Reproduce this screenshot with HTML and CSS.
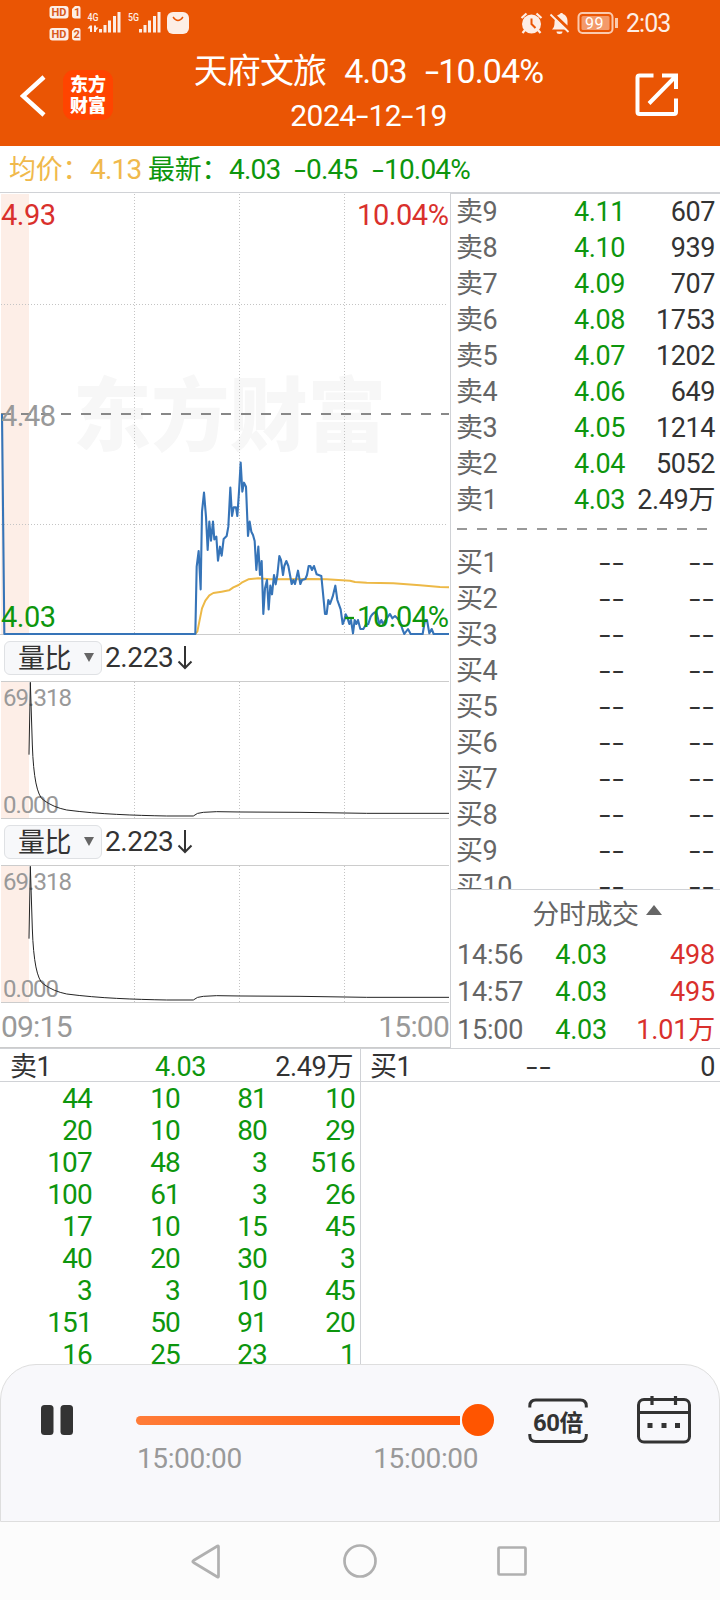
FILE: index.html
```html
<!DOCTYPE html>
<html lang="zh-CN">
<head>
<meta charset="utf-8">
<title>天府文旅</title>
<link rel="stylesheet" href="styles.css">
</head>
<body>
<main class="app">
  <header class="top">
    <svg class="status" viewBox="0 0 720 48">
      <g fill="#fdeee6">
        <rect x="49.500" y="6" width="19" height="12.500" rx="3"/><path d="M75 6h3.500q2 0 2 2v10.500H75q-3 0-3-3V9z"/>
        <rect x="49.500" y="28" width="19" height="12.500" rx="3"/><path d="M75 28h3.500q2 0 2 2v10.500H75q-3 0-3-3V31z"/>
        <g class="tiny"><text x="87.500" y="20.500" textLength="11" lengthAdjust="spacingAndGlyphs">4G</text><text x="128" y="20.500" textLength="11" lengthAdjust="spacingAndGlyphs">5G</text></g>
        <path d="M99 29h3v3.500h-3zM103.500 25h3v7.500h-3zM108 20.500h3v12h-3zM113 16h3v16.500h-3zM117.500 12h3v20.500h-3zM139 29h3v3.500h-3zM143.500 25h3v7.500h-3zM148 20.500h3v12h-3zM153 16h3v16.500h-3zM157.500 12h3v20.500h-3z"/>
        <path d="M90 25.500h2V32h-2zM87.500 28.500l2.500-3v3zM94 25.500h2V32h-2zM96 30.500l2.500-3h-2.500z"/>
        <rect x="167" y="12" width="22" height="22" rx="6"/>
      </g>
      <path d="M173 17q5 7 10 0" fill="none" stroke="#ea5504" stroke-width="1.300"/>
      <g fill="#d85a1c" class="hd"><text x="51.500" y="16.300" textLength="15">HD</text><text x="74" y="16.300">1</text><text x="51.500" y="38.300" textLength="15">HD</text><text x="73.500" y="38.300">2</text></g>
      <g fill="#fdeee6">
        <circle cx="531.500" cy="24" r="9.500"/>
        <path d="M521.500 18l5-4.500M541.500 18l-5-4.500M525 30l-2.500 3M538 30l2.500 3" stroke="#fdeee6" stroke-width="2.200"/>
        <path d="M552 29.500c2-2 2.500-4 2.500-7 0-1.500.5-3 1-4l11.500 11zM557 15.500l3-1.500c0-1.500 3-1.500 3 0 3 1 4.500 4 4.500 7v4.500zM556.500 31.500h6a3 2.500 0 0 1-6 0z"/>
        <path d="M550.500 14.500l18 17.500" stroke="#fdeee6" stroke-width="1.800"/>
      </g>
      <path d="M531.500 18.500v5.500l4 4" fill="none" stroke="#ea5504" stroke-width="2"/>
      <rect x="578.500" y="13" width="34" height="20" rx="4" fill="none" stroke="#fbc9ae" stroke-width="2"/>
      <rect x="581.500" y="16" width="28" height="14" rx="1.500" fill="#f3996a"/>
      <path d="M616.500 18v10" stroke="#fbc9ae" stroke-width="3"/>
      <text class="batt" x="585" y="28.500" fill="#fff" textLength="18">99</text>
      <text class="clock" x="626" y="32" fill="#fdeee6" textLength="45">2:03</text>
    </svg>
    <div class="bar">
      <svg class="back" viewBox="0 0 26 42"><path d="M24 2 3 21 24 40" fill="none" stroke="#fff" stroke-width="4.500"/></svg>
      <div class="logo"><span>东方</span><span>财富</span></div>
      <div class="titles">
        <h1><span>天府文旅</span><span>4.03</span><span><i class="h">-</i>10.04%</span></h1>
        <p>2024<i class="h">-</i>12<i class="h">-</i>19</p>
      </div>
      <svg class="share" viewBox="0 0 44 44"><path d="M18.500 2.500H4.500q-2 0-2 2V39q0 2 2 2H39q2 0 2-2V25.500M27 2.500h14v13.500M40 4 14 30.500" fill="none" stroke="#fff" stroke-width="4"/></svg>
    </div>
  </header>

  <div class="info">
    <span class="gold cn">均价：</span><span class="gold">4.13</span><span class="cn">最新：</span><span>4.03</span><span><i class="h">-</i>0.45</span><span><i class="h">-</i>10.04%</span>
  </div>

  <div class="middle">
    <section class="charts">
      <svg class="price" viewBox="0 193 450 443">
        <rect x="1" y="194" width="28" height="440" fill="#fdeee7"/>
        <text class="mark" x="73" y="444" textLength="313" lengthAdjust="spacingAndGlyphs">东方财富</text>
        <path class="grid" d="M1 304.500H448M1 524.500H448M134.500 194V634M239.500 194V634M344.500 194V634"/>
        <path d="M0 634.500H449" stroke="#ccc"/>
        <path d="M1 414H449" stroke="#888" stroke-width="2" stroke-dasharray="10 10"/>
        <text class="lab" x="1" y="224.500" fill="#d9302c" textLength="55">4.93</text>
        <text class="lab" x="357" y="224.500" fill="#d9302c" textLength="92">10.04%</text>
        <g transform="translate(180 440) scale(.33333)" fill="none" stroke-linejoin="round">
          <path stroke="#edb947" stroke-width="6" d="M45 582 52 575 58 545 66 505 76 482 88 466 100 459 125 455 147 451 160 442 176 435 185 428 205 418 235 415 270 418 400 417 440 418 510 422 525 426 560 428 640 430 720 436 780 441 807 442"/>
          <path stroke="#3674b8" stroke-width="6.300" d="M-534-78-527 582H46L50 380 56 333 62 448 66 215 72 158 78 230 83 330 88 245 93 302 99 245 103 298 109 290 114 362 120 320 125 347 131 297 140 288 145 260 151 143 156 228 161 202 168 202 172 228 177 155 182 68 187 155 192 128 198 140 204 288 209 245 214 275 219 285 224 303 229 390 235 320 240 405 245 363 250 522 255 445 261 420 266 508 271 437 276 463 282 405 287 433 292 405 298 348 303 360 309 405 313 378 319 363 325 378 335 432 340 420 345 432 354 392 361 432 366 420 376 417 381 405 386 378 391 378 396 390 402 378 410 403 424 408 430 470 435 522 440 522 445 480 450 492 458 470 466 437 472 480 482 508 488 552 493 540 497 523 503 535 508 552 513 540 519 580 524 540 529 552 534 540 541 567 550 567 557 555 565 552 572 530 577 523 583 518 589 515 598 552 604 540 609 552 620 535 630 522 637 535 645 528 652 535 660 545 667 567 673 582 684 567 692 582H728L735 540 741 540 748 580 755 567 761 582H807"/>
        </g>
        <text class="lab" x="1" y="426" fill="#999" textLength="55">4.48</text>
        <text class="lab" x="1" y="626.500" fill="#0d960d" textLength="55">4.03</text>
        <text class="lab" x="357" y="626.500" fill="#0d960d" textLength="92">10.04%</text>
        <path d="M345 618h9" stroke="#0d960d" stroke-width="2.300"/>
      </svg>
      <div class="pick"><span class="drop"><em>量比</em><b></b></span><span>2.223</span><svg viewBox="0 0 16 24"><path d="M8 0v22M1.500 15.500 8 22l6.500-6.500" fill="none" stroke="#333" stroke-width="2"/></svg></div>
      <svg class="ratio" viewBox="0 681 450 139">
        <rect x="1" y="682" width="28" height="136" fill="#fdeee7"/>
        <path class="grid" d="M134.500 682V818M239.500 682V818M344.500 682V818"/>
        <path d="M1 681.500H449M1 818.500H449" stroke="#ccc"/>
        <text class="small" x="3" y="706" textLength="69">69.318</text>
        <text class="small" x="3" y="812.500" textLength="56">0.000</text>
        <path class="curve" transform="translate(0 620) scale(.33333)" d="M87 404 91 187 97 375Q102 520 130 540 160 562 200 570C300 583 400 586 500 588H580Q590 578 610 577L650 575 720 576 900 577 1100 580H1347"/>
      </svg>
      <div class="pick"><span class="drop"><em>量比</em><b></b></span><span>2.223</span><svg viewBox="0 0 16 24"><path d="M8 0v22M1.500 15.500 8 22l6.500-6.500" fill="none" stroke="#333" stroke-width="2"/></svg></div>
      <svg class="ratio" viewBox="0 681 450 139">
        <rect x="1" y="682" width="28" height="136" fill="#fdeee7"/>
        <path class="grid" d="M134.500 682V818M239.500 682V818M344.500 682V818"/>
        <path d="M1 681.500H449M1 818.500H449" stroke="#ccc"/>
        <text class="small" x="3" y="706" textLength="69">69.318</text>
        <text class="small" x="3" y="812.500" textLength="56">0.000</text>
        <path class="curve" transform="translate(0 620) scale(.33333)" d="M87 404 91 187 97 375Q102 520 130 540 160 562 200 570C300 583 400 586 500 588H580Q590 578 610 577L650 575 720 576 900 577 1100 580H1347"/>
      </svg>
      <div class="axis"><span>09:15</span><span>15:00</span></div>
    </section>

    <section class="book">
      <div class="levels">
        <div class="row"><span>卖9</span><span>4.11</span><span>607</span></div>
        <div class="row"><span>卖8</span><span>4.10</span><span>939</span></div>
        <div class="row"><span>卖7</span><span>4.09</span><span>707</span></div>
        <div class="row"><span>卖6</span><span>4.08</span><span>1753</span></div>
        <div class="row"><span>卖5</span><span>4.07</span><span>1202</span></div>
        <div class="row"><span>卖4</span><span>4.06</span><span>649</span></div>
        <div class="row"><span>卖3</span><span>4.05</span><span>1214</span></div>
        <div class="row"><span>卖2</span><span>4.04</span><span>5052</span></div>
        <div class="row"><span>卖1</span><span>4.03</span><span>2.49万</span></div>
        <div class="split"></div>
        <div class="row buy"><span>买1</span><span><i>--</i></span><span><i>--</i></span></div>
        <div class="row buy"><span>买2</span><span><i>--</i></span><span><i>--</i></span></div>
        <div class="row buy"><span>买3</span><span><i>--</i></span><span><i>--</i></span></div>
        <div class="row buy"><span>买4</span><span><i>--</i></span><span><i>--</i></span></div>
        <div class="row buy"><span>买5</span><span><i>--</i></span><span><i>--</i></span></div>
        <div class="row buy"><span>买6</span><span><i>--</i></span><span><i>--</i></span></div>
        <div class="row buy"><span>买7</span><span><i>--</i></span><span><i>--</i></span></div>
        <div class="row buy"><span>买8</span><span><i>--</i></span><span><i>--</i></span></div>
        <div class="row buy"><span>买9</span><span><i>--</i></span><span><i>--</i></span></div>
        <div class="row buy"><span>买10</span><span><i>--</i></span><span><i>--</i></span></div>
      </div>
      <div class="trades">
        <h2>分时成交<b></b></h2>
        <div class="tick"><span>14:56</span><span>4.03</span><span>498</span></div>
        <div class="tick"><span>14:57</span><span>4.03</span><span>495</span></div>
        <div class="tick"><span>15:00</span><span>4.03</span><span>1.01万</span></div>
      </div>
    </section>
  </div>

  <div class="queue">
    <section class="side">
      <div class="qhead"><span>卖1</span><span class="green">4.03</span><span>2.49万</span></div>
      <div class="cells">
        <span>44</span><span>10</span><span>81</span><span>10</span>
        <span>20</span><span>10</span><span>80</span><span>29</span>
        <span>107</span><span>48</span><span>3</span><span>516</span>
        <span>100</span><span>61</span><span>3</span><span>26</span>
        <span>17</span><span>10</span><span>15</span><span>45</span>
        <span>40</span><span>20</span><span>30</span><span>3</span>
        <span>3</span><span>3</span><span>10</span><span>45</span>
        <span>151</span><span>50</span><span>91</span><span>20</span>
        <span>16</span><span>25</span><span>23</span><span>1</span>
      </div>
    </section>
    <section class="side right">
      <div class="qhead"><span>买1</span><span><i>--</i></span><span>0</span></div>
    </section>
  </div>

  <section class="player">
    <svg class="pause" viewBox="0 0 34 32"><rect x="1" y="1" width="12.500" height="30" rx="3.500"/><rect x="20.500" y="1" width="12.500" height="30" rx="3.500"/></svg>
    <div class="progress">
      <div class="track"><div class="fill"></div><div class="knob"></div></div>
      <div class="times"><span>15:00:00</span><span>15:00:00</span></div>
    </div>
    <svg class="speed" viewBox="0 0 60 48"><path d="M1.800 10.500V9q0-6 6-6h44.500q6 0 6 6v1.500M1.800 37v1.500q0 6 6 6h44.500q6 0 6-6V37" fill="none" stroke="#333" stroke-width="3"/><text x="5" y="33.500" textLength="50" lengthAdjust="spacingAndGlyphs">60倍</text></svg>
    <svg class="cal" viewBox="0 0 56 50"><rect x="2.500" y="4.500" width="51" height="42.500" rx="5.500" fill="none" stroke="#333" stroke-width="3"/><path d="M3 17.500h50M16 1v9M39.500 1v9" stroke="#333" stroke-width="3.200"/><path d="M11.500 28h5v5h-5zM25.500 28h5v5h-5zM39 28h5v5h-5z" fill="#333"/></svg>
  </section>

  <nav class="nav">
    <svg viewBox="0 0 36 36"><path d="M28.500 3.500v30q0 1-1 .5L3.500 19.500q-1.500-1 0-2L27.500 3q1-.5 1 .5z"/></svg>
    <svg viewBox="0 0 36 36"><circle cx="18" cy="18" r="15.500"/></svg>
    <svg viewBox="0 0 36 36"><rect x="4.500" y="4.500" width="27" height="27" rx="1"/></svg>
  </nav>
</main>
</body>
</html>
```
FILE: styles.css
```css
* { box-sizing: border-box; }
body { margin: 0; background: #fff; }
svg { display: block; flex: none; }
.app {
  width: 720px; height: 1600px; overflow: hidden;
  display: flex; flex-direction: column;
  font-family: Roboto, "Noto Sans CJK SC", sans-serif;
  font-size: 27px; letter-spacing: -0.4px; color: #333;
}
h1, h2, p { margin: 0; font-weight: 400; }
i, em { font-style: normal; }
.h { display: inline-block; transform: scaleX(1.5); margin: 0 3px 0 2px; }

.top { height: 146px; background: #ea5504; color: #fff; flex: none; }
.status { width: 720px; height: 48px; }
.tiny { font-size: 11.5px; font-weight: 500; letter-spacing: 0; }
.hd { font-size: 11px; font-weight: 700; letter-spacing: 0; }
.batt { font-size: 16px; }
.clock { font-size: 25px; }
.bar { height: 98px; display: flex; align-items: flex-start; }
.back { width: 26px; height: 42px; margin: 27px 0 0 20px; }
.logo {
  width: 50px; height: 50px; margin: 22px 0 0 17px; padding-top: 3px;
  display: grid; grid-template-rows: 21px 21px; justify-content: center;
  border-radius: 11px; background: #ff4400;
  font: 900 18px/21px "Noto Sans CJK SC", sans-serif; letter-spacing: 0;
}
.titles { width: 355px; margin-left: 78px; display: flex; flex-direction: column; align-items: center; }
.titles h1 { display: flex; gap: 18px; font-size: 34px; line-height: 46px; letter-spacing: -0.9px; white-space: nowrap; }
.titles p { font-size: 30px; line-height: 44px; letter-spacing: -0.5px; }
.share { width: 44px; height: 44px; margin: 25px 0 0 89px; }

.info {
  height: 47px; flex: none; padding: 0 0 0 9px; border-bottom: 1px solid #d0d2d6;
  display: grid; grid-template-columns: 81px 58px 81px 65px 78px auto; align-items: center;
  color: #0d960d; white-space: nowrap; font-size: 28px; letter-spacing: -0.8px;
}
.info .cn { font-size: 27px; letter-spacing: -0.3px; padding-bottom: 3px; }
.gold { color: #f0b94c; }

.middle { height: 855px; flex: none; display: flex; }
.charts { width: 450px; }
.price { width: 450px; height: 443px; }
.grid { fill: none; stroke: #c4c4c4; stroke-dasharray: 1 2; }
.mark { font: 900 80px "Noto Sans CJK SC", sans-serif; fill: #f7f7f7; letter-spacing: 0; }
.lab { font-size: 29px; letter-spacing: 0; }
.small { font-size: 24px; fill: #999; letter-spacing: 0; }
.curve { fill: none; stroke: #222; stroke-width: 3; }
.pick { height: 45px; display: flex; align-items: center; padding: 0 0 2px 4px; font-size: 28px; letter-spacing: -0.4px; }
.pick svg { width: 16px; height: 24px; margin-left: 4px; }
.drop {
  width: 98px; height: 34px; margin-right: 3px; padding-left: 13px;
  display: flex; align-items: center; font-size: 27px; letter-spacing: -0.4px;
  background: #f7f8fa; border: 1px solid #dfe1e4; border-radius: 6px;
}
.drop em { padding-bottom: 3px; }
.drop b { margin-left: 13px; border: 5.5px solid transparent; border-top: 9px solid #666; border-bottom: 0; }
.ratio { width: 450px; height: 139px; }
.axis { height: 44px; display: flex; justify-content: space-between; align-items: center; padding: 1px 1px 0; color: #999; font-size: 30px; letter-spacing: -0.8px; border-bottom: 1px solid #ccc; }

.book { width: 270px; border-left: 1px solid #d0d2d6; border-top: 1px solid #d0d2d6; display: flex; flex-direction: column; }
.levels { height: 697px; overflow: hidden; border-bottom: 1px solid #d0d2d6; }
.row { height: 36px; display: grid; grid-template-columns: 90px 79px 1fr; align-items: center; padding: 0 5px; line-height: 36px; white-space: nowrap; }
.row span:first-child { color: #666; }
.row span:nth-child(2) { text-align: right; color: #0d960d; }
.row span:nth-child(3) { text-align: right; }
.row.buy span:nth-child(2) { color: #333; }
.row i, .qhead i { display: inline-block; transform: scaleX(1.5); transform-origin: right; letter-spacing: 1.3px; margin-right: -1px; }
.split { height: 2px; margin: 10px 13px 15px 6px; background: repeating-linear-gradient(90deg, #999 0 10px, transparent 10px 20px); }
.trades h2 { height: 46px; display: flex; align-items: center; justify-content: center; gap: 7px; color: #666; font-size: 27px; padding: 0 0 2px 22px; }
.trades h2 b { border: 8px solid transparent; border-bottom: 10px solid #666; border-top: 0; margin-bottom: 5px; }
.trades { padding: 0 5px 0 6px; }
.tick { height: 37.3px; display: grid; grid-template-columns: 67px 83px 1fr; line-height: 39px; color: #666; letter-spacing: -0.2px; }
.tick span:nth-child(2) { color: #0d960d; text-align: right; }
.tick span:nth-child(3) { color: #d9302c; text-align: right; }

.queue { height: 316px; flex: none; display: flex; border-top: 1px solid #d0d2d6; }
.side { width: 360px; }
.side.right { border-left: 1px solid #d0d2d6; }
.qhead { height: 33px; display: grid; grid-template-columns: 100px 96px 1fr; padding: 0 7px 0 10px; line-height: 36px; border-bottom: 1px solid #d0d2d6; }
.qhead span:nth-child(n+2) { text-align: right; }
.right .qhead { grid-template-columns: 100px 82px 1fr; padding: 0 5px 0 9px; }
.green { color: #0d960d; }
.cells { display: grid; grid-template-columns: 92px 88px 87px 88px; grid-auto-rows: 32px; line-height: 34px; text-align: right; color: #0d960d; font-size: 28px; letter-spacing: -0.8px; }

.player { height: 158px; flex: none; display: flex; align-items: flex-start; background: #f8f8fb; border: 1px solid #dedede; border-radius: 36px 36px 0 0; }
.pause { width: 34px; height: 32px; margin: 39px 0 0 39px; fill: #333; }
.progress { width: 360px; margin: 38px 0 0 62px; }
.track { height: 34px; display: flex; align-items: center; }
.fill { width: 324px; height: 9px; border-radius: 5px 0 0 5px; background: linear-gradient(90deg, #ff7c38, #ff5a0a); }
.knob { width: 32px; height: 32px; margin-left: 2px; border-radius: 50%; background: #ff5500; }
.times { width: 342px; display: flex; justify-content: space-between; padding-left: 1px; color: #999; font-size: 28px; line-height: 43px; letter-spacing: -0.4px; }
.speed { width: 60px; height: 48px; margin: 32px 0 0 32px; }
.speed text { font: 700 23px Roboto, "Noto Sans CJK SC", sans-serif; fill: #333; }
.cal { width: 56px; height: 50px; margin: 30px 0 0 48px; }
.nav { flex: 1; background: #fcfcfc; display: flex; justify-content: center; gap: 116px; padding-top: 20.5px; }
.nav svg { width: 36px; height: 36px; fill: none; stroke: #b0b0b0; stroke-width: 2.7; }
```
